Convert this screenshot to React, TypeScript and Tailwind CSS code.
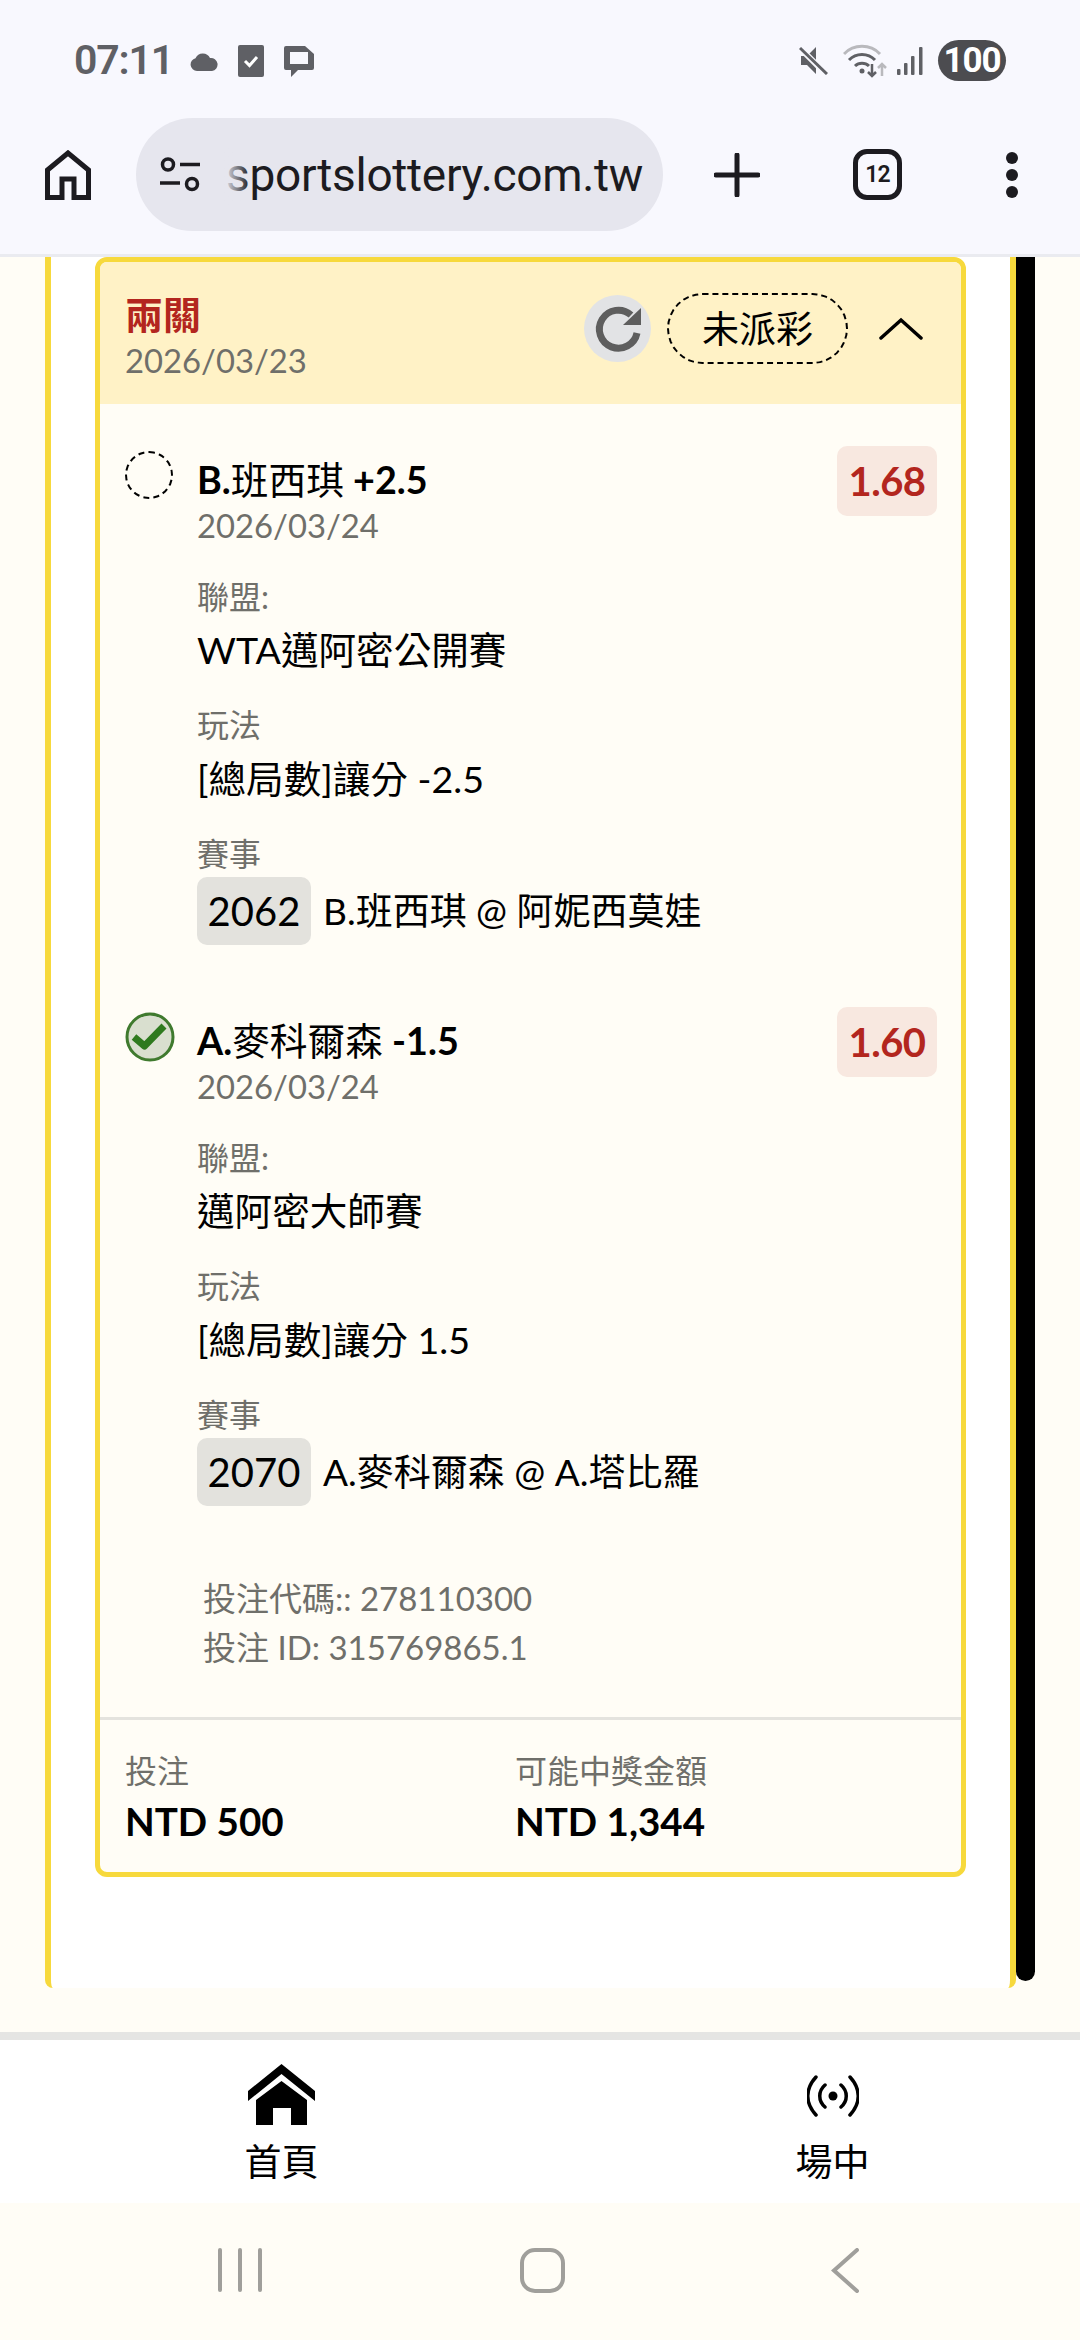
import React from "react";

const sans = "[font-family:Lato,'Noto_Sans_CJK_TC',sans-serif]";

function StatusBar() {
  return (
    <div className="flex h-[118px] items-center pl-[74px] pr-[74px] pt-[3px] [font-family:Roboto,sans-serif] text-[#5f6065]">
      <span className="w-[93px] whitespace-nowrap text-[41px] font-semibold leading-none tracking-[-1.2px]">07:11</span>
      <svg className="ml-[23px]" width="29" height="20" viewBox="0 0 29 20">
        <path d="M7 20a6.500 6.500 0 0 1-1.500-12.800A8 8 0 0 1 20 7a6.500 6.500 0 0 1 2 13z" fill="#5f6065" />
      </svg>
      <svg className="ml-[19px]" width="26" height="32" viewBox="0 0 26 32">
        <rect width="26" height="32" rx="2" fill="#5f6065" />
        <path d="M7 16l4.500 4.500L19 12" stroke="#fff" strokeWidth="3" fill="none" />
      </svg>
      <svg className="ml-[19px]" width="32" height="32" viewBox="0 0 32 32">
        <path d="M3 1h19l9 8v14a2 2 0 0 1-2 2H15l-7 7v-7H3a2 2 0 0 1-2-2V3a2 2 0 0 1 2-2z" fill="#5f6065" />
        <path d="M7 7h18v12H7z" fill="#f8f8fe" />
      </svg>
      <svg className="ml-auto" width="29" height="29" viewBox="0 0 29 29">
        <path d="M2 10h6l9-9v27l-9-9H2z" fill="#5f6065" />
        <path d="M2 3l25 25" stroke="#f8f8fe" strokeWidth="6" />
        <path d="M1 2l27 26" stroke="#5f6065" strokeWidth="3" />
      </svg>
      <svg className="ml-[15px]" width="45" height="34" viewBox="0 0 45 34">
        <path d="M1 10a25 25 0 0 1 36 0" stroke="#b9b9bd" strokeWidth="3" fill="none" />
        <path d="M6 16a18 18 0 0 1 26 0M12 22a10 10 0 0 1 14 0" stroke="#5f6065" strokeWidth="3" fill="none" />
        <circle cx="19" cy="27" r="2.500" fill="#5f6065" />
        <path d="M29 20v12M25 28l4 4 4-4" stroke="#5f6065" strokeWidth="2.500" fill="none" />
        <path d="M39 32V20M35 24l4-4 4 4" stroke="#b9b9bd" strokeWidth="2.500" fill="none" />
      </svg>
      <svg className="ml-[9px]" width="26" height="28" viewBox="0 0 26 28" fill="#5f6065">
        <rect x="0" y="22" width="3.500" height="6" rx="1" />
        <rect x="7" y="16" width="3.500" height="12" rx="1" />
        <rect x="14" y="9" width="3.500" height="19" rx="1" />
        <rect x="22" y="0" width="3.500" height="28" rx="1" />
      </svg>
      <div className="ml-[15px] flex h-[41px] w-[68px] items-center justify-center rounded-full bg-[#4c4c50] text-[35px] font-bold leading-none tracking-[-1px] text-white">
        100
      </div>
    </div>
  );
}

function Toolbar() {
  return (
    <div className="flex h-[136px] items-start pl-[45px] text-[#1c1b20]">
      <div className="flex h-[113px] items-center">
        <svg width="46" height="50" viewBox="0 0 46 50">
          <path d="M2.500 20L23 3l20.500 17v27.500H29V29H17v18.500H2.500z" stroke="#1c1b20" strokeWidth="5" fill="none" />
        </svg>
        <div className="relative ml-[45px] flex h-[113px] w-[527px] items-center rounded-full bg-[#e6e6ee] pl-[24px]">
          <svg width="40" height="35" viewBox="0 0 40 35" className="shrink-0">
            <circle cx="8" cy="7.500" r="5.500" stroke="#1c1b20" strokeWidth="3.500" fill="none" />
            <path d="M20 7.500h20M0 26h20" stroke="#1c1b20" strokeWidth="3.500" />
            <circle cx="32" cy="27" r="5.500" stroke="#1c1b20" strokeWidth="3.500" fill="none" />
          </svg>
          <span className="ml-[26px] whitespace-nowrap [font-family:Roboto,sans-serif] text-[46px] leading-none tracking-[-0.3px] text-[#1c1b20]">
            sportslottery.com.tw
          </span>
          <div className="absolute left-[88px] top-[28px] h-[60px] w-[26px] bg-gradient-to-r from-[#e6e6ee] to-transparent" />
        </div>
        <svg className="ml-[51px]" width="46" height="44" viewBox="0 0 46 44">
          <path d="M23 2v40M2 22h42" stroke="#1c1b20" strokeWidth="5" strokeLinecap="round" />
        </svg>
        <div className="ml-[93px] flex h-[51px] w-[49px] items-center justify-center rounded-[14px] border-[5px] border-[#1c1b20] [font-family:Roboto,sans-serif] text-[23px] font-semibold leading-none tracking-[-1px]">
          12
        </div>
        <div className="ml-[104px] flex flex-col gap-[5px]">
          <div className="h-[12px] w-[12px] rounded-full bg-[#1c1b20]" />
          <div className="h-[12px] w-[12px] rounded-full bg-[#1c1b20]" />
          <div className="h-[12px] w-[12px] rounded-full bg-[#1c1b20]" />
        </div>
      </div>
    </div>
  );
}

function Label({ children, className = "" }: { children: React.ReactNode; className?: string }) {
  return <div className={`text-[32px] leading-[44px] text-[#6f6f6a] ${className}`}>{children}</div>;
}

function Value({ children, className = "" }: { children: React.ReactNode; className?: string }) {
  return <div className={`text-[37.6px] leading-[48px] text-black ${className}`}>{children}</div>;
}

type Bet = {
  a: string;
  b: string;
  c: string;
  odds: string;
  date: string;
  league: string;
  play: string;
  code: string;
  match: string;
  won: boolean;
};

function BetItem({ bet }: { bet: Bet }) {
  return (
    <div className="flex pl-[25px] pr-[24px]">
      <div className="mt-[5px] w-[48px] shrink-0">
        {bet.won ? (
          <svg width="50" height="50" viewBox="0 0 50 50">
            <circle cx="25" cy="25" r="23" fill="#d9dfcf" stroke="#3f7a2e" strokeWidth="3" />
            <path d="M9 25l10.500 9L39 14" stroke="#2e7a1e" strokeWidth="7" fill="none" strokeLinejoin="round" />
          </svg>
        ) : (
          <div className="h-[48px] w-[48px] rounded-full border-2 border-dashed border-black" />
        )}
      </div>
      <div className="ml-[24px] min-w-0 flex-1">
        <div className="flex items-start justify-between">
          <div className="pt-[10px]">
            <div className="text-[37.7px] leading-[48px] text-black">
              <span className="font-bold">{bet.a}</span>
              {bet.b}
              <span className="font-bold">{bet.c}</span>
            </div>
            <div className="text-[32.8px] leading-[44px] text-[#6f6f6a]">{bet.date}</div>
          </div>
          <div className="flex h-[70px] w-[100px] items-center justify-center rounded-[10px] bg-[#f8e8e0] text-[40px] font-bold leading-none tracking-[-0.5px] text-[#b3261e]">
            {bet.odds}
          </div>
        </div>
        <Label className="mt-[27px]">聯盟:</Label>
        <Value className="mt-[7px]">{bet.league}</Value>
        <Label className="mt-[29px]">玩法</Label>
        <Value className="mt-[8px]">{bet.play}</Value>
        <Label className="mt-[29px]">賽事</Label>
        <div className="mt-[1px] flex items-center">
          <div className="flex h-[68px] w-[114px] items-center justify-center rounded-[10px] bg-[#e3e2dd] text-[40px] leading-none text-black">
            {bet.code}
          </div>
          <div className="ml-[12px] text-[37px] leading-[48px] text-black">{bet.match}</div>
        </div>
      </div>
    </div>
  );
}

const bets: Bet[] = [
  {
    a: "B.",
    b: "班西琪",
    c: " +2.5",
    odds: "1.68",
    date: "2026/03/24",
    league: "WTA邁阿密公開賽",
    play: "[總局數]讓分 -2.5",
    code: "2062",
    match: "B.班西琪 @ 阿妮西莫娃",
    won: false,
  },
  {
    a: "A.",
    b: "麥科爾森",
    c: " -1.5",
    odds: "1.60",
    date: "2026/03/24",
    league: "邁阿密大師賽",
    play: "[總局數]讓分 1.5",
    code: "2070",
    match: "A.麥科爾森 @ A.塔比羅",
    won: true,
  },
];

function Card() {
  return (
    <div className="w-[871px] overflow-hidden rounded-[12px] border-[5px] border-[#f7d93c] bg-[#fffdf6]">
      <div className="flex h-[142px] items-center bg-[#fff2c6] pb-[9px] pl-[25px] pr-[38px]">
        <div className="pt-[18px]">
          <div className="text-[38px] font-bold leading-[44px] text-[#b3261e]">兩關</div>
          <div className="mt-[3px] text-[32.8px] leading-[44px] text-[#6f6f6a]">2026/03/23</div>
        </div>
        <div className="ml-auto flex h-[67px] w-[67px] items-center justify-center rounded-full bg-[#e2e3e5]">
          <svg width="66" height="66" viewBox="0 0 66 66">
            <path d="M46 19A19 19 0 1 0 52 37" stroke="#5e5e5e" strokeWidth="7" fill="none" />
            <path d="M56 12v17H38z" fill="#5e5e5e" />
          </svg>
        </div>
        <div className="ml-[16px] flex h-[71px] w-[181px] items-center justify-center rounded-[36px] border-2 border-dashed border-black text-[37px] leading-none text-black">
          未派彩
        </div>
        <svg className="ml-[31px]" width="44" height="23" viewBox="0 0 44 23">
          <path d="M2 21L22 3l20 18" stroke="#000" strokeWidth="3.500" fill="none" strokeLinecap="round" />
        </svg>
      </div>
      <div className="flex flex-col gap-[62px] pt-[42px]">
        {bets.map((b) => (
          <BetItem key={b.code} bet={b} />
        ))}
      </div>
      <div className="mt-[68px] pl-[103px] text-[33px] leading-[49px] text-[#6f6f6a]">
        <div>投注代碼:: 278110300</div>
        <div>投注 ID: 315769865.1</div>
      </div>
      <div className="mt-[45px] h-[3px] bg-[#e4e3de]" />
      <div className="flex pb-[26px] pl-[25px] pt-[29px]">
        <div className="w-[390px]">
          <Label>投注</Label>
          <div className="mt-[3px] text-[38.6px] font-bold leading-[50px] text-black">NTD 500</div>
        </div>
        <div>
          <Label>可能中獎金額</Label>
          <div className="mt-[3px] text-[38.6px] font-bold leading-[50px] text-black">NTD 1,344</div>
        </div>
      </div>
    </div>
  );
}

function BottomNav() {
  return (
    <div className="flex h-[171px] items-start border-t-[8px] border-[#e5e5e3] bg-white pl-[246px]">
      <div className="flex w-[71px] flex-col items-center pt-[24px]">
        <svg width="67" height="61" viewBox="0 0 67 61" className="shrink-0">
          <path d="M0 27L33.500 0 67 27v10L33.500 10 0 37z" fill="#000" />
          <path d="M33.500 17L59 36v25H43V44H25v17H8V36z" fill="#000" />
        </svg>
        <div className="mt-[17px] whitespace-nowrap text-[37px] leading-[40px] text-black">首頁</div>
      </div>
      <div className="ml-[480px] flex w-[71px] flex-col items-center pt-[35px]">
        <svg width="52" height="42" viewBox="0 0 52 42" className="shrink-0">
          <circle cx="26" cy="21" r="4.500" fill="#000" />
          <path d="M9 2C-2 14-2 28 9 40M43 2c11 12 11 26 0 38M18 10c-7 6-7 16 0 22M34 10c7 6 7 16 0 22" stroke="#000" strokeWidth="3.500" fill="none" strokeLinecap="round" />
        </svg>
        <div className="mt-[25px] whitespace-nowrap text-[37px] leading-[40px] text-black">場中</div>
      </div>
    </div>
  );
}

function SystemNav() {
  return (
    <div className="flex h-[137px] items-start bg-[#fffdf6] pl-[218px] pt-[45px]">
      <div className="flex h-[44px] gap-[16px]">
        <div className="w-[4px] rounded-full bg-[#a09f9b]" />
        <div className="w-[4px] rounded-full bg-[#a09f9b]" />
        <div className="w-[4px] rounded-full bg-[#a09f9b]" />
      </div>
      <div className="ml-[258px] h-[45px] w-[45px] rounded-[15px] border-[4px] border-[#a09f9b]" />
      <svg className="ml-[266px]" width="28" height="45" viewBox="0 0 28 45">
        <path d="M26 2L3 22.500 26 43" stroke="#a09f9b" strokeWidth="4" fill="none" strokeLinecap="round" />
      </svg>
    </div>
  );
}

export default function App() {
  return (
    <div className={`flex h-[2340px] w-[1080px] flex-col overflow-hidden bg-[#fffdf6] ${sans}`}>
      <div className="border-b-[3px] border-[#eaebf0] bg-[#f8f8fe]">
        <StatusBar />
        <Toolbar />
      </div>
      <div className="flex h-[1775px] items-start pl-[45px]">
        <div className="h-[1731px] w-[971px] rounded-b-[8px] border-x-[6px] border-x-[#f7d93c] bg-white pl-[44px]">
          <Card />
        </div>
        <div className="h-[1724px] w-[19px] rounded-b-[10px] bg-black" />
      </div>
      <BottomNav />
      <SystemNav />
    </div>
  );
}
